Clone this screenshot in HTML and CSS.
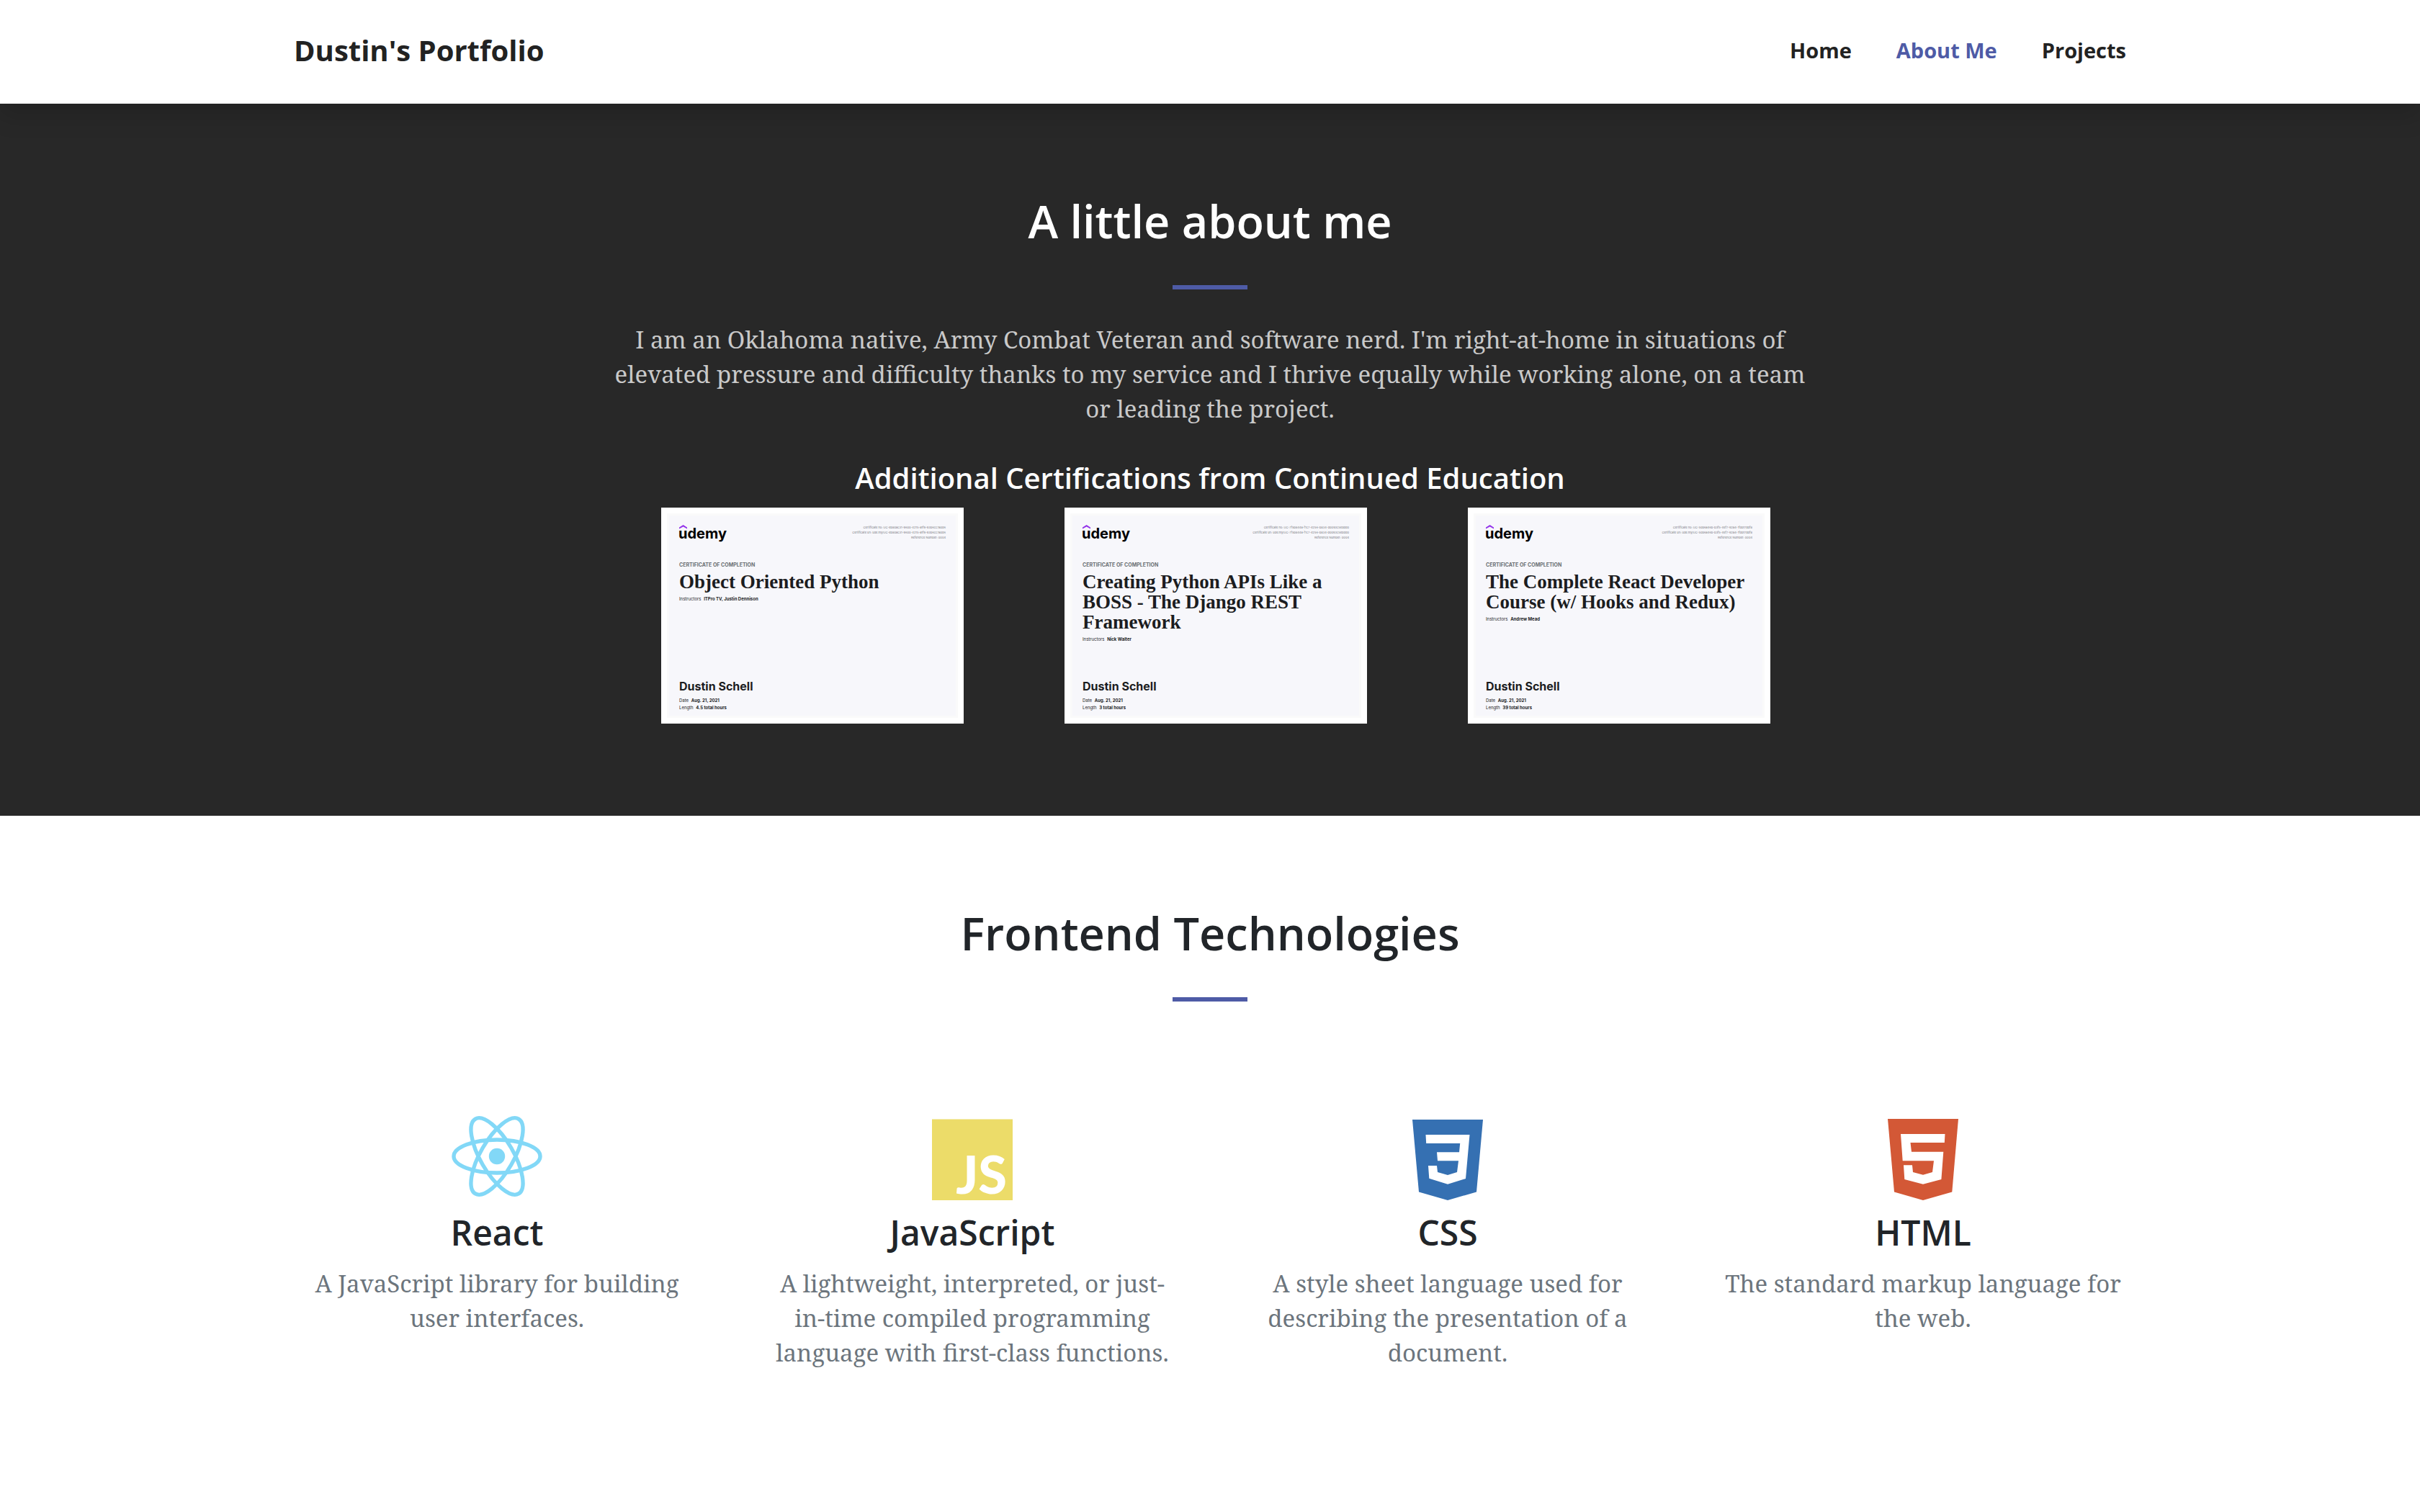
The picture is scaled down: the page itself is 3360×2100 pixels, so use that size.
FILE: index.html
```html
<!DOCTYPE html>
<html lang="en">
<head>
  <meta charset="utf-8">
  <meta name="viewport" content="width=device-width, initial-scale=1">
  <title>Dustin's Portfolio</title>
  <link rel="stylesheet" href="styles.css">
</head>
<body>
  <header class="site-header">
    <div class="navbar">
      <a class="brand" href="#">Dustin's Portfolio</a>
      <nav class="nav">
        <a class="nav-link" href="#home">Home</a>
        <a class="nav-link nav-link-active" href="#about">About Me</a>
        <a class="nav-link" href="#projects">Projects</a>
      </nav>
    </div>
  </header>

  <main>
    <section class="section section-dark" id="about">
      <h2 class="section-title">A little about me</h2>
      <hr class="divider">
      <div class="about">
        <p class="lead">I am an Oklahoma native, Army Combat Veteran and software nerd. I'm right-at-home in situations of elevated pressure and difficulty thanks to my service and I thrive equally while working alone, on a team or leading the project.</p>
        <h4 class="subtitle">Additional Certifications from Continued Education</h4>
        <div class="certs">
          <article class="cert">
            <div class="cert-top">
              <svg class="cert-logo" viewBox="0 0 68 26" role="img" aria-label="udemy"><path d="M0 5.6V3.4L5.6 0 11 3.4V5.6L5.6 2.6Z" fill="#9333ea"/><text class="cert-wordmark" x="-1" y="19">udemy</text></svg>
              <p class="cert-ids">Certificate no: UC-eb80ac31-9600-4215-a1f9-93b6cc7a0d6<br>Certificate url: ude.my/UC-eb80ac31-9600-4215-a1f9-93b6cc7a0d6<br>Reference Number: 0004</p>
            </div>
            <p class="cert-label">CERTIFICATE OF COMPLETION</p>
            <h5 class="cert-title">Object Oriented Python</h5>
            <p class="cert-meta">Instructors <b>ITPro TV, Justin Dennison</b></p>
            <p class="cert-name">Dustin Schell</p>
            <p class="cert-meta">Date <b>Aug. 21, 2021</b></p>
            <p class="cert-meta">Length <b>4.5 total hours</b></p>
          </article>
          <article class="cert">
            <div class="cert-top">
              <svg class="cert-logo" viewBox="0 0 68 26" role="img" aria-label="udemy"><path d="M0 5.6V3.4L5.6 0 11 3.4V5.6L5.6 2.6Z" fill="#9333ea"/><text class="cert-wordmark" x="-1" y="19">udemy</text></svg>
              <p class="cert-ids">Certificate no: UC-7f5b844a-f1c7-4256-b834-d0093c5ebdd0<br>Certificate url: ude.my/UC-7f5b844a-f1c7-4256-b834-d0093c5ebdd0<br>Reference Number: 0004</p>
            </div>
            <p class="cert-label">CERTIFICATE OF COMPLETION</p>
            <h5 class="cert-title">Creating Python APIs Like a BOSS - The Django REST Framework</h5>
            <p class="cert-meta">Instructors <b>Nick Walter</b></p>
            <p class="cert-name">Dustin Schell</p>
            <p class="cert-meta">Date <b>Aug. 21, 2021</b></p>
            <p class="cert-meta">Length <b>3 total hours</b></p>
          </article>
          <article class="cert">
            <div class="cert-top">
              <svg class="cert-logo" viewBox="0 0 68 26" role="img" aria-label="udemy"><path d="M0 5.6V3.4L5.6 0 11 3.4V5.6L5.6 2.6Z" fill="#9333ea"/><text class="cert-wordmark" x="-1" y="19">udemy</text></svg>
              <p class="cert-ids">Certificate no: UC-50b6a46b-b3f5-4ef7-92a4-1fdb17ddf8<br>Certificate url: ude.my/UC-50b6a46b-b3f5-4ef7-92a4-1fdb17ddf8<br>Reference Number: 0004</p>
            </div>
            <p class="cert-label">CERTIFICATE OF COMPLETION</p>
            <h5 class="cert-title">The Complete React Developer Course (w/ Hooks and Redux)</h5>
            <p class="cert-meta">Instructors <b>Andrew Mead</b></p>
            <p class="cert-name">Dustin Schell</p>
            <p class="cert-meta">Date <b>Aug. 21, 2021</b></p>
            <p class="cert-meta">Length <b>39 total hours</b></p>
          </article>
        </div>
      </div>
    </section>

    <section class="section" id="frontend">
      <h2 class="section-title">Frontend Technologies</h2>
      <hr class="divider">
      <div class="techs">
        <article class="tech">
          <svg class="tech-icon" viewBox="0 0 128 128" aria-hidden="true">
            <g fill="none" stroke="#82d8f7" stroke-width="5.4">
              <ellipse cx="64" cy="60" rx="60" ry="23"/>
              <ellipse cx="64" cy="60" rx="60" ry="23" transform="rotate(60 64 60)"/>
              <ellipse cx="64" cy="60" rx="60" ry="23" transform="rotate(120 64 60)"/>
            </g>
            <circle cx="64" cy="60" r="11.2" fill="#82d8f7"/>
          </svg>
          <h3 class="tech-name">React</h3>
          <p class="tech-text">A JavaScript library for building user interfaces.</p>
        </article>
        <article class="tech">
          <svg class="tech-icon" viewBox="0 0 128 128" aria-hidden="true">
            <path d="M8 8.500H120V121H8Z" fill="#ecdc69"/>
            <text class="js-mark" x="112" y="112" text-anchor="end">JS</text>
          </svg>
          <h3 class="tech-name">JavaScript</h3>
          <p class="tech-text">A lightweight, interpreted, or just-in-time compiled programming language with first-class functions.</p>
        </article>
        <article class="tech">
          <svg class="tech-icon" viewBox="0 0 128 128" aria-hidden="true">
            <g transform="translate(15 9)">
              <path d="M0 0H98L89 100.500 49 112 9 100.500Z" fill="#3570b2"/>
              <path d="M18.500 21H79.500L74 82 49 89.700 23.300 81.700 22 64H34L35 73 49 77 62 73 64 57.300H35L34 45.300H65L66.200 33H19.200Z" fill="#fff"/>
            </g>
          </svg>
          <h3 class="tech-name">CSS</h3>
          <p class="tech-text">A style sheet language used for describing the presentation of a document.</p>
        </article>
        <article class="tech">
          <svg class="tech-icon" viewBox="0 0 128 128" aria-hidden="true">
            <g transform="translate(15 8)">
              <path d="M0 0H98L89.300 101.500 49 113 9 101.500Z" fill="#d35836"/>
              <path d="M18 21H79.500L78.800 33H31.500L33 45.700H77.300L74.400 84 49 90.700 23.300 84 22 64.300H34L35 74 49 77.700 62 74 64 58.300H20.700Z" fill="#fff"/>
            </g>
          </svg>
          <h3 class="tech-name">HTML</h3>
          <p class="tech-text">The standard markup language for the web.</p>
        </article>
      </div>
    </section>
  </main>
</body>
</html>
```
FILE: styles.css
```css
* {
  box-sizing: border-box;
}

body,
h2,
h3,
h4,
h5,
p {
  margin: 0;
}

body {
  background: #fff;
  color: #212529;
  font-family: "Noto Serif", "DejaVu Serif Condensed", serif;
  font-size: 33px;
  line-height: 48px;
}

h2,
h3,
h4 {
  font-family: "Open Sans", sans-serif;
  font-weight: 600;
}

/* Header */
.site-header {
  position: relative;
  z-index: 1;
  background: #fff;
  box-shadow: 0 16px 32px rgba(0, 0, 0, 0.15);
  font-family: "Open Sans", sans-serif;
  font-weight: 700;
}

.navbar {
  display: flex;
  align-items: center;
  justify-content: space-between;
  max-width: 2640px;
  margin: 0 auto;
  padding: 40px 48px 44px;
}

.brand {
  color: #222;
  font-size: 40px;
  line-height: 60px;
  text-decoration: none;
}

.nav {
  display: flex;
  gap: 62px;
}

.nav-link {
  color: #222;
  font-size: 29px;
  line-height: 48px;
  text-decoration: none;
}

.nav-link-active {
  color: #4e5ba6;
}

/* Sections */
.section {
  padding: 128px 24px;
  text-align: center;
}

.section-dark {
  background: #282828;
  color: #fff;
}

.section-title {
  font-size: 63px;
  line-height: 70px;
}

.divider {
  width: 104px;
  height: 6px;
  margin: 54px auto 46px;
  border: 0;
  background: #4e5ba6;
}

/* About */
.about {
  max-width: 1680px;
  margin: 0 auto;
}

.lead {
  margin-bottom: 48px;
  color: #c9c9c9;
}

.subtitle {
  margin-bottom: 17px;
  font-size: 40px;
  line-height: 48px;
}

.certs {
  display: grid;
  grid-template-columns: repeat(3, 560px);
  padding-left: 78px;
}

.cert {
  display: flex;
  flex-direction: column;
  width: 420px;
  height: 300px;
  padding: 16px 17px 9px;
  border: 8px solid #fff;
  background: #f7f7fb;
  box-shadow: inset 0 0 0 3px #fafafa;
  color: #1c1d1f;
  font-family: "Inter", sans-serif;
  text-align: left;
}

.cert-top {
  display: flex;
  justify-content: space-between;
  margin-bottom: 25px;
}

.cert-logo {
  width: 68px;
  height: 26px;
  overflow: visible;
}

.cert-wordmark {
  fill: #000;
  font: 700 20px "Inter", sans-serif;
}

.cert-ids {
  color: #77787f;
  font-size: 4px;
  line-height: 7px;
  text-align: right;
}

.cert-label {
  margin-bottom: 4px;
  color: #6a6f73;
  font-size: 7px;
  font-weight: 700;
  line-height: 10px;
}

.cert-title {
  margin-bottom: 5px;
  font-family: "Liberation Serif", serif;
  font-size: 27px;
  line-height: 28px;
}

.cert-meta {
  font-size: 6px;
  line-height: 10px;
}

.cert-meta b {
  margin-left: 2px;
}

.cert-name {
  margin: auto 0 5px;
  font-size: 16px;
  font-weight: 700;
  line-height: 20px;
}

/* Technologies */
.techs {
  display: grid;
  grid-template-columns: repeat(4, 1fr);
  max-width: 2640px;
  margin: 0 auto;
  padding-top: 109px;
}

.tech {
  padding: 0 48px;
}

.tech-icon {
  display: block;
  width: 128px;
  height: 128px;
  margin: 0 auto 9px;
}

.js-mark {
  fill: #fff;
  font: 900 72px "Lato", sans-serif;
}

.tech-name {
  margin-bottom: 18px;
  font-size: 48px;
  line-height: 58px;
}

.tech-text {
  color: #6c757d;
}
```
